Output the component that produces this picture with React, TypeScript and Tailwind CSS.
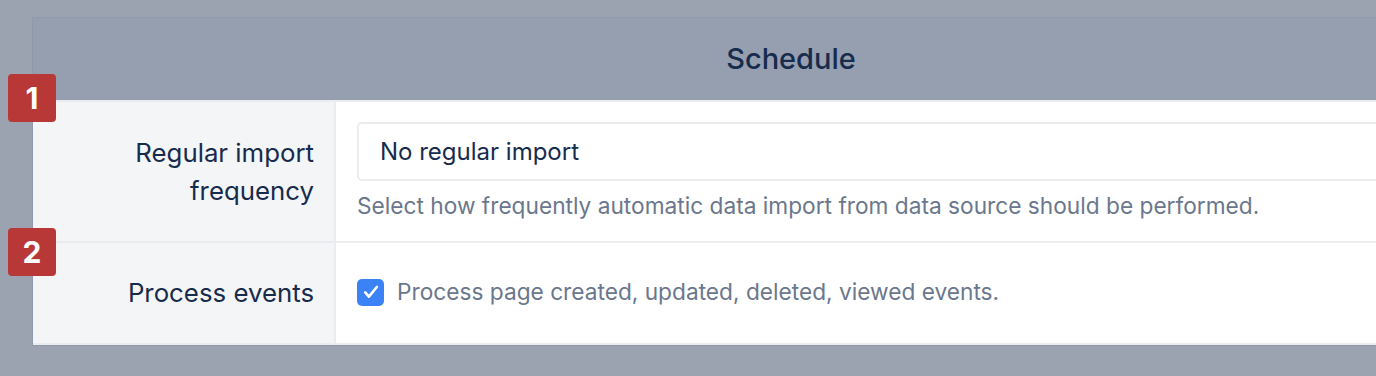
const badgeClass =
  "absolute left-[8px] flex h-[48px] w-[48px] items-center justify-center rounded-[4px] bg-[#b83838] text-[30px] font-bold text-white";

export default function App() {
  return (
    <div className="relative h-[376px] w-[1376px] overflow-hidden bg-[#9ca3b0] pl-[32px] pt-[17px] font-['Inter',sans-serif]">
      <div className="w-[1518px] border border-[#8f99aa] bg-white">
        <div className="flex h-[82px] items-center justify-center bg-[#959fb0] text-[29px] font-medium text-[#172b4d]">
          Schedule
        </div>

        <div className="flex border-t-2 border-[#ebecf0]">
          <div className="w-[303px] shrink-0 border-r-2 border-[#ebecf0] bg-[#f4f5f7] pr-[20px] pt-[32px] text-right text-[25.8px] leading-[38px] text-[#172b4d]">
            Regular import
            <br />
            frequency
          </div>
          <div className="flex-1 pl-[21px] pt-[20px] pb-[20px]">
            <div className="flex h-[59px] items-center rounded-[5px] border-2 border-[#ebecf0] px-[21px] text-[24px] text-[#172b4d]">
              No regular import
            </div>
            <p className="mt-[10px] text-[22.7px] leading-[30px] text-[#6b778c]">
              Select how frequently automatic data import from data source should be performed.
            </p>
          </div>
        </div>

        <div className="flex h-[104px] border-t-2 border-b-2 border-[#ebecf0]">
          <div className="flex w-[303px] shrink-0 items-center justify-end border-r-2 border-[#ebecf0] bg-[#f4f5f7] pr-[20px] text-[25.8px] text-[#172b4d]">
            Process events
          </div>
          <div className="flex flex-1 items-center gap-[13px] pl-[21px] pb-[2px]">
            <span className="flex h-[27px] w-[27px] items-center justify-center rounded-[5px] bg-[#3b82f6]">
              <svg viewBox="0 0 24 24" className="h-[20px] w-[20px]" fill="none" stroke="white" strokeWidth="3.2" strokeLinecap="round" strokeLinejoin="round">
                <path d="M5 12.5l4.5 5L19 6" />
              </svg>
            </span>
            <span className="text-[22.7px] text-[#6b778c]">Process page created, updated, deleted, viewed events.</span>
          </div>
        </div>
      </div>

      <div className={`${badgeClass} top-[74px]`}>1</div>
      <div className={`${badgeClass} top-[228px]`}>2</div>
    </div>
  );
}
